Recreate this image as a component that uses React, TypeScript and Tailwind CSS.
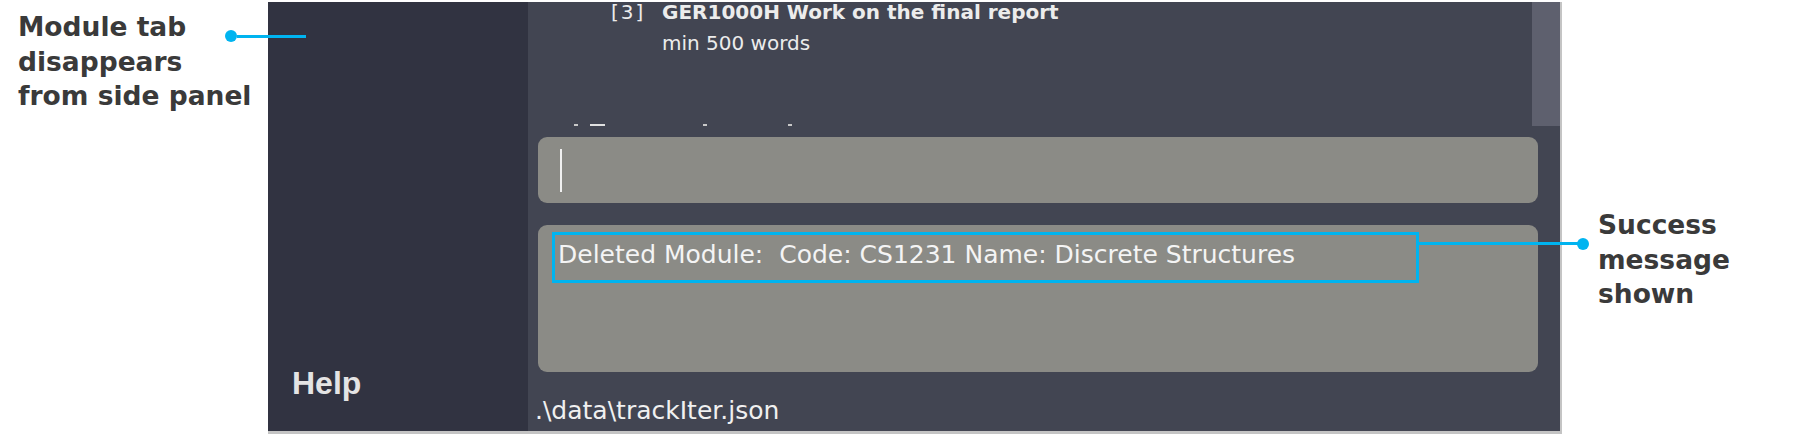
const font = "font-['DejaVu_Sans',sans-serif]";

function Annotation({ lines }: { lines: string[] }) {
  return (
    <div className={`${font} font-bold text-[26.5px] leading-[34.5px] text-[#3a3a3a]`}>
      {lines.map((l) => (
        <div key={l}>{l}</div>
      ))}
    </div>
  );
}

function Connector({ left, top, width }: { left: number; top: number; width: number }) {
  return (
    <div className="absolute flex items-center" style={{ left, top, width }}>
      <div className="h-[12px] w-[12px] -ml-[6px] rounded-full bg-[#00b4f0] shrink-0" />
      <div className="h-[3px] flex-1 bg-[#00b4f0]" />
    </div>
  );
}

export default function App() {
  return (
    <div className="relative w-[1808px] h-[434px] bg-white flex overflow-hidden">
      {/* left note */}
      <div className="w-[268px] shrink-0 pl-[18px] pt-[10px]">
        <Annotation lines={["Module tab", "disappears", "from side panel"]} />
      </div>

      {/* app window */}
      <div className="w-[1294px] h-[432px] mt-[2px] shrink-0 flex border-r-[2px] border-b-[3px] border-[#c4c4c4]">
        <aside className="w-[260px] shrink-0 bg-[#313341] flex flex-col justify-end pl-[24px] pb-[24px]">
          <span className="font-['Liberation_Sans',sans-serif] font-bold text-[32px] text-[#e4e4e4]">Help</span>
        </aside>

        <main className={`flex-1 bg-[#424552] flex flex-col ${font}`}>
          <div className="h-[125px] flex">
            <div className="flex-1 flex flex-col">
              <div className="pl-[83px] text-[#ececec]">
                <div className="flex items-baseline">
                  <span className="w-[51px] text-[20px] leading-[18px] tracking-[2px]">[3]</span>
                  <span className="font-bold text-[20px] leading-[20px]">GER1000H Work on the final report</span>
                </div>
                <div className="mt-[5px] pl-[51px] text-[20px] leading-[32px]">min 500 words</div>
              </div>
              <div className="mt-auto mb-[1px] flex items-end h-[2px] pl-[46px]">
                <div className="w-[4px] h-[2px] bg-[#c8c8c8]" />
                <div className="w-[15px] h-[2px] bg-[#e0e0e0] ml-[12px]" />
                <div className="w-[4px] h-[2px] bg-[#c8c8c8] ml-[98px]" />
                <div className="w-[4px] h-[2px] bg-[#c8c8c8] ml-[81px]" />
              </div>
            </div>
            <div className="w-[28px] h-[124px] bg-[#5e606e]" />
          </div>

          <div className="ml-[10px] mr-[22px] mt-[10px] h-[66px] rounded-[9px] bg-[#8b8b86] pl-[22px] pt-[12px]">
            <div className="w-[2px] h-[43px] bg-[#f0f0f0]" />
          </div>

          <div className="ml-[10px] mr-[22px] mt-[22px] h-[147px] rounded-[9px] bg-[#8b8b86] pl-[14px] pt-[7px]">
            <div className="w-[867px] h-[51px] border-[3px] border-[#00b4f0] pl-[3px] pt-[1px]">
              <span className="whitespace-pre text-[25px] text-[#f4f4f4]">
                Deleted Module:  Code: CS1231 Name: Discrete Structures
              </span>
            </div>
          </div>

          <div className="pl-[7px] pt-[20px] text-[25px] text-[#f0f0f0]">.\data\trackIter.json</div>
        </main>
      </div>

      {/* right note */}
      <div className="pl-[36px] pt-[208px]">
        <Annotation lines={["Success", "message", "shown"]} />
      </div>

      <Connector left={231} top={30} width={75} />
      <div className="absolute left-[1419px] top-[242px] w-[164px] h-[3px] bg-[#00b4f0]" />
      <div className="absolute left-[1577px] top-[238px] w-[12px] h-[12px] rounded-full bg-[#00b4f0]" />
    </div>
  );
}
